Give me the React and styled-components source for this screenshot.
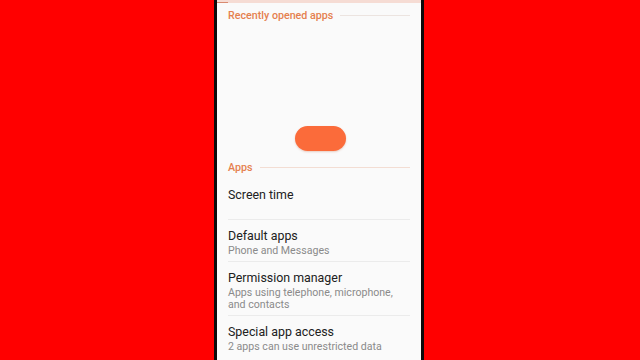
import React from 'react';
import styled, { createGlobalStyle } from 'styled-components';

const GlobalStyle = createGlobalStyle`
  html, body {
    margin: 0;
    padding: 0;
    background: #ff0000;
    font-family: Roboto, "Noto Sans", sans-serif;
  }
`

const Page = styled.div`
  width: 640px;
  height: 360px;
  display: flex;
  justify-content: center;
  padding-right: 2px;
  box-sizing: border-box;
  overflow: hidden;
`

const Phone = styled.div`
  width: 210px;
  height: 360px;
  background: #0b0b0b;
  padding: 0 3px;
  box-sizing: border-box;
`

const Screen = styled.div`
  height: 100%;
  background: #fafafa;
  display: flex;
  flex-direction: column;
  overflow: hidden;
`

const TopBar = styled.div`
  height: 3px;
  background: #f6dcd4;
  position: relative;
  &::after {
    content: "";
    position: absolute;
    left: 0;
    bottom: 0;
    width: 11px;
    height: 1px;
    background: #d98a70;
  }
`

const SectionHeader = styled.div`
  height: 24px;
  display: flex;
  align-items: center;
  gap: 7px;
  padding: 0 11px;
  color: #e5804f;
  font-size: 10.7px;
  font-weight: 500;
  white-space: nowrap;
  &::after {
    content: "";
    flex: 1;
    height: 1px;
    background: ${p => p.$line || '#ece4e0'};
  }
`

const RecentArea = styled.div`
  height: 128px;
  display: flex;
  justify-content: center;
  align-items: flex-start;
  padding-top: 99px;
  box-sizing: border-box;
`

const Pill = styled.button`
  width: 51px;
  height: 25px;
  border: none;
  border-radius: 13px;
  background: #fb6b3a;
  box-shadow: 0 1px 2px rgba(180, 70, 30, 0.25);
  margin-left: 2px;
`

const List = styled.div`
  display: flex;
  flex-direction: column;
  padding: 0 11px;
`

const Item = styled.div`
  padding: 6px 0 4px;
  min-height: ${p => p.$min || 0}px;
  box-sizing: border-box;
  border-bottom: ${p => (p.$last ? 'none' : '1px solid #ebebeb')};
`

const Title = styled.div`
  font-size: 12.4px;
  line-height: 19px;
  color: #212121;
`

const Sub = styled.div`
  font-size: 10.6px;
  line-height: 12px;
  color: #8a8a8a;
`

const items = [
  { title: 'Screen time', min: 41 },
  { title: 'Default apps', sub: ['Phone and Messages'] },
  { title: 'Permission manager', sub: ['Apps using telephone, microphone,', 'and contacts'] },
  { title: 'Special app access', sub: ['2 apps can use unrestricted data'], last: true },
];

const App = () => {
  return (
    <Page>
      <GlobalStyle />
      <Phone>
        <Screen>
          <TopBar />
          <SectionHeader>Recently opened apps</SectionHeader>
          <RecentArea>
            <Pill />
          </RecentArea>
          <SectionHeader $line="#f3ddd3">Apps</SectionHeader>
          <List>
            {items.map(it => (
              <Item key={it.title} $min={it.min} $last={it.last}>
                <Title>{it.title}</Title>
                {it.sub && it.sub.map(s => <Sub key={s}>{s}</Sub>)}
              </Item>
            ))}
          </List>
        </Screen>
      </Phone>
    </Page>
  );
};

export default App;
